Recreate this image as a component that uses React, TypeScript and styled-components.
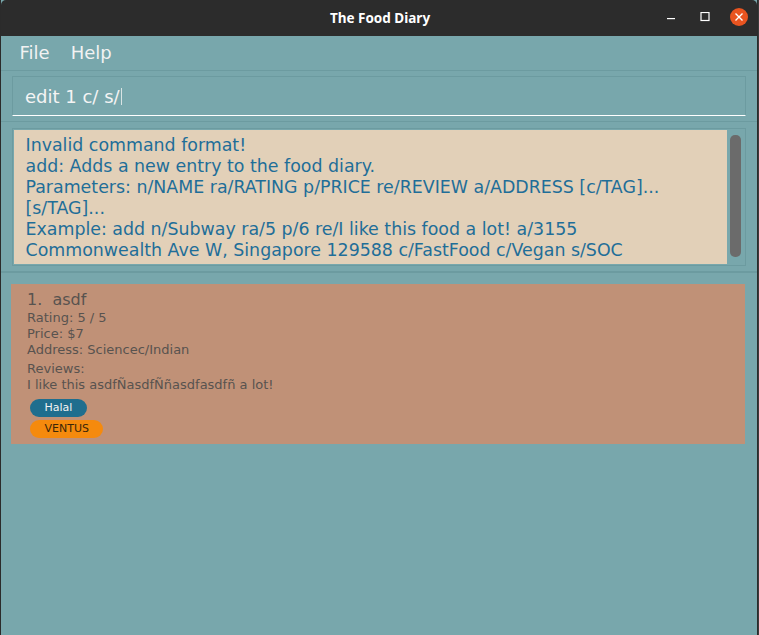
import React from "react";
import styled, { createGlobalStyle } from "styled-components";

const GlobalStyle = createGlobalStyle`
  html, body {
    margin: 0;
    padding: 0;
    background: #3b3b3b;
  }
  * {
    box-sizing: border-box;
  }
`;

const Window = styled.div`
  display: flex;
  flex-direction: column;
  width: 758px;
  height: 635px;
  border-left: 1px solid #2b2b2b;
  border-right: 1px solid #2b2b2b;
  background: #78a7ac;
  font-family: "DejaVu Sans", "Liberation Sans", sans-serif;
  overflow: hidden;
`;

const TitleBar = styled.div`
  position: relative;
  height: 36px;
  flex: none;
  display: flex;
  align-items: center;
  justify-content: center;
  background: #2c2c2c;
  border-radius: 5px 5px 0 0;
`;

const Title = styled.div`
  font-family: "Noto Sans", "DejaVu Sans", sans-serif;
  font-weight: 700;
  font-size: 13.5px;
  color: #ffffff;
  margin-left: 2px;
`;

const Controls = styled.div`
  position: absolute;
  right: 9px;
  top: 8px;
  display: flex;
  align-items: center;
  gap: 16px;
`;

const CtrlButton = styled.div`
  width: 18px;
  height: 18px;
  display: flex;
  align-items: center;
  justify-content: center;
`;

const CloseButton = styled(CtrlButton)`
  border-radius: 50%;
  background: #e95420;
`;

const MenuBar = styled.div`
  height: 35px;
  flex: none;
  display: flex;
  align-items: center;
  padding-left: 8px;
  border-bottom: 1px solid #6c9ba0;
`;

const MenuItem = styled.div`
  padding: 0 10.5px;
  font-size: 18px;
  line-height: 34px;
  color: #f2f2f2;
`;

const CommandSection = styled.div`
  flex: none;
  padding: 5px 11px 5px 11px;
  border-bottom: 1px solid #6c9ba0;
`;

const CommandBox = styled.div`
  height: 40px;
  display: flex;
  align-items: center;
  padding-left: 12px;
  border: 1px solid #6c9ba0;
  border-bottom: 1px solid #ffffff;
  font-size: 18px;
  color: #f4f4f4;
`;

const Caret = styled.span`
  display: inline-block;
  width: 1px;
  height: 17px;
  margin-left: 1px;
  background: #d9e4e4;
  vertical-align: -3px;
`;

const ResultSection = styled.div`
  flex: none;
  padding: 6px 11px 5px 11px;
  border-bottom: 2px solid #6c9ba0;
`;

const ResultBox = styled.div`
  display: flex;
  height: 138px;
  padding: 1px;
  border: 1px solid #6c9ba0;
`;

const ResultText = styled.div`
  flex: 1;
  background: #e2d0b8;
  padding: 5px 0 0 11.5px;
  font-size: 17.4px;
  line-height: 21px;
  color: #1f6e98;
  white-space: nowrap;
`;

const ScrollTrack = styled.div`
  width: 17px;
  flex: none;
  padding: 5px 3px 7px 3px;
`;

const ScrollThumb = styled.div`
  height: 100%;
  border-radius: 5px;
  background: #6b6b6b;
`;

const ListSection = styled.div`
  flex: 1;
  padding: 11px 12px 0 10px;
`;

const Card = styled.div`
  background: #c09177;
  padding: 6px 16px 6px 16px;
  color: #58534f;
`;

const CardTitle = styled.div`
  font-size: 16px;
  line-height: 20px;
  white-space: pre;
`;

const Field = styled.div<{ $gap?: number }>`
  font-size: 13px;
  line-height: 16px;
  margin-top: ${(p) => p.$gap ?? 0}px;
`;

const Tags = styled.div`
  display: flex;
  flex-direction: column;
  align-items: flex-start;
  gap: 3px;
  margin: 6px 0 0 3px;
`;

const Tag = styled.span<{ $bg: string; $fg: string }>`
  height: 18px;
  line-height: 18px;
  padding: 0 14.5px;
  border-radius: 9px;
  font-size: 11px;
  background: ${(p) => p.$bg};
  color: ${(p) => p.$fg};
`;

const resultLines = [
  "Invalid command format!",
  "add: Adds a new entry to the food diary.",
  "Parameters: n/NAME ra/RATING p/PRICE re/REVIEW a/ADDRESS [c/TAG]...",
  "[s/TAG]...",
  "Example: add n/Subway ra/5 p/6 re/I like this food a lot! a/3155",
  "Commonwealth Ave W, Singapore 129588 c/FastFood c/Vegan s/SOC",
];

export default function App() {
  return (
    <>
      <GlobalStyle />
      <Window>
        <TitleBar>
          <Title>The Food Diary</Title>
          <Controls>
            <CtrlButton>
              <svg width="10" height="10" viewBox="0 0 10 10">
                <rect x="1" y="6" width="8" height="1.2" fill="#ffffff" />
              </svg>
            </CtrlButton>
            <CtrlButton>
              <svg width="10" height="10" viewBox="0 0 10 10">
                <rect x="1" y="0.5" width="8" height="8" fill="none" stroke="#ffffff" strokeWidth="1.2" />
              </svg>
            </CtrlButton>
            <CloseButton>
              <svg width="10" height="10" viewBox="0 0 10 10">
                <path d="M1.5 1.5 L8.5 8.5 M8.5 1.5 L1.5 8.5" stroke="#ffffff" strokeWidth="1.4" />
              </svg>
            </CloseButton>
          </Controls>
        </TitleBar>

        <MenuBar>
          <MenuItem>File</MenuItem>
          <MenuItem>Help</MenuItem>
        </MenuBar>

        <CommandSection>
          <CommandBox>
            <span>edit 1 c/ s/</span>
            <Caret />
          </CommandBox>
        </CommandSection>

        <ResultSection>
          <ResultBox>
            <ResultText>
              {resultLines.map((line) => (
                <div key={line}>{line}</div>
              ))}
            </ResultText>
            <ScrollTrack>
              <ScrollThumb />
            </ScrollTrack>
          </ResultBox>
        </ResultSection>

        <ListSection>
          <Card>
            <CardTitle>{"1.  asdf"}</CardTitle>
            <Field>Rating: 5 / 5</Field>
            <Field>Price: $7</Field>
            <Field>Address: Sciencec/Indian</Field>
            <Field $gap={3}>Reviews:</Field>
            <Field>I like this asdfÑasdfÑñasdfasdfñ a lot!</Field>
            <Tags>
              <Tag $bg="#1f6e8e" $fg="#f2f2f2">Halal</Tag>
              <Tag $bg="#f58a0d" $fg="#3b2608">VENTUS</Tag>
            </Tags>
          </Card>
        </ListSection>
      </Window>
    </>
  );
}
